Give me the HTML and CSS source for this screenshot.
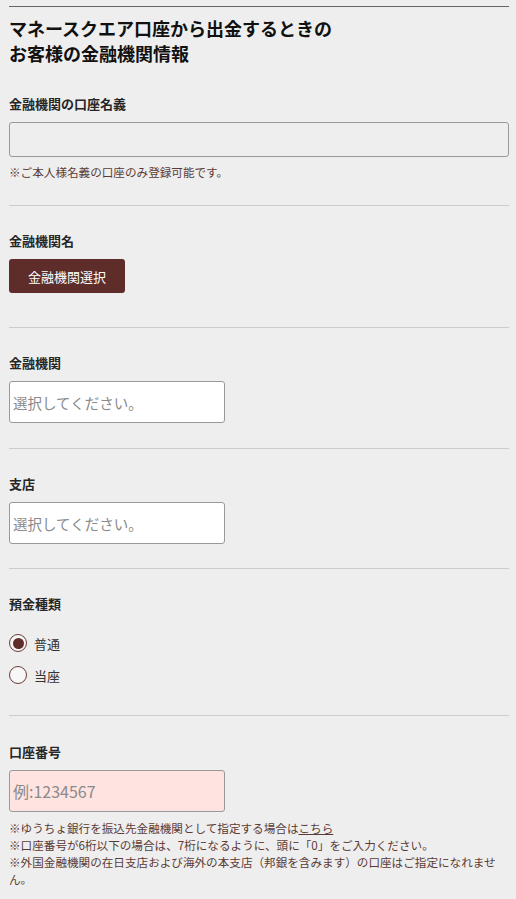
FILE: index.html
```html
<!DOCTYPE html>
<html lang="ja">
<head>
<meta charset="utf-8">
<link rel="stylesheet" href="styles.css">
</head>
<body>
<div class="page">
  <div class="topline"></div>
  <h1 class="title">マネースクエア口座から出金するときの<br>お客様の金融機関情報</h1>

  <section class="sec first">
    <div class="label">金融機関の口座名義</div>
    <input class="field wide" type="text">
    <p class="note">※ご本人様名義の口座のみ登録可能です。</p>
  </section>

  <section class="sec">
    <div class="label">金融機関名</div>
    <button class="btn" type="button">金融機関選択</button>
  </section>

  <section class="sec bank">
    <div class="label">金融機関</div>
    <input class="field small" type="text" placeholder="選択してください。">
  </section>

  <section class="sec">
    <div class="label">支店</div>
    <input class="field small" type="text" placeholder="選択してください。">
  </section>

  <section class="sec">
    <div class="label">預金種類</div>
    <div class="radios">
      <label class="radio"><span class="circle checked"></span><span>普通</span></label>
      <label class="radio"><span class="circle"></span><span>当座</span></label>
    </div>
  </section>

  <section class="sec last">
    <div class="label">口座番号</div>
    <input class="field small pink" type="text" placeholder="例:1234567">
    <div class="notes">
      <p>※ゆうちょ銀行を振込先金融機関として指定する場合は<a href="#">こちら</a></p>
      <p>※口座番号が6桁以下の場合は、7桁になるように、頭に「0」をご入力ください。</p>
      <p>※外国金融機関の在日支店および海外の本支店（邦銀を含みます）の口座はご指定になれません。</p>
    </div>
  </section>
</div>
</body>
</html>
```
FILE: styles.css
```css
html, body {
  margin: 0;
  padding: 0;
  background: #eeeeee;
}
body {
  font-family: "Noto Sans CJK JP", "Noto Sans", sans-serif;
  color: #333;
}
.page {
  width: 500px;
  margin-left: 9px;
  padding-top: 6px;
}
.topline {
  height: 1px;
  background: #666;
}
.title {
  margin: 9px 0 0;
  font-size: 18px;
  line-height: 25px;
  font-weight: bold;
  color: #111;
}
.sec {
  padding: 25px 0 24px;
  border-bottom: 1px solid #cccccc;
  display: flex;
  flex-direction: column;
  align-items: flex-start;
}
.sec.first {
  padding-top: 28px;
  padding-bottom: 24px;
}
.sec.bank {
  padding-bottom: 25px;
}
.sec.last {
  border-bottom: none;
  padding-top: 26px;
}
.label {
  font-size: 13px;
  line-height: 20px;
  font-weight: bold;
  color: #262626;
  margin-bottom: 8px;
}
.field {
  box-sizing: border-box;
  border: 1px solid #999;
  border-radius: 3px;
  font-family: "Noto Sans CJK JP", sans-serif;
  font-size: 14.5px;
  padding: 0 3px;
  margin: 0;
  outline: none;
}
.field::placeholder {
  color: #8a8a8a;
}
.field.wide {
  width: 500px;
  height: 35px;
  background: #eeeeee;
}
.field.small {
  width: 216px;
  height: 42px;
  background: #ffffff;
}
.field.pink {
  background: #ffe3e0;
  font-size: 16px;
}
.note, .notes p {
  margin: 0;
  font-size: 11.6px;
  line-height: 17px;
  color: #5b3b35;
}
.note {
  margin-top: 7px;
}
.notes {
  margin-top: 8px;
}
.notes a {
  color: #5b3b35;
  text-decoration: underline;
}
.btn {
  height: 34px;
  padding: 0 19px;
  border: none;
  border-radius: 3px;
  background: #5e2d29;
  color: #fff;
  font-family: "Noto Sans CJK JP", sans-serif;
  font-size: 13px;
  margin-bottom: 10px;
}
.radios {
  display: flex;
  flex-direction: column;
  margin-top: 5px;
}
.radio {
  display: flex;
  align-items: center;
  gap: 7px;
  height: 32px;
  font-size: 13px;
  color: #333;
}
.circle {
  box-sizing: border-box;
  width: 18px;
  height: 18px;
  border: 1.5px solid #6b3a35;
  border-radius: 50%;
  background: #f7f7f7;
  display: flex;
  align-items: center;
  justify-content: center;
}
.circle.checked::after {
  content: "";
  width: 11px;
  height: 11px;
  border-radius: 50%;
  background: #5e2d29;
}
```
